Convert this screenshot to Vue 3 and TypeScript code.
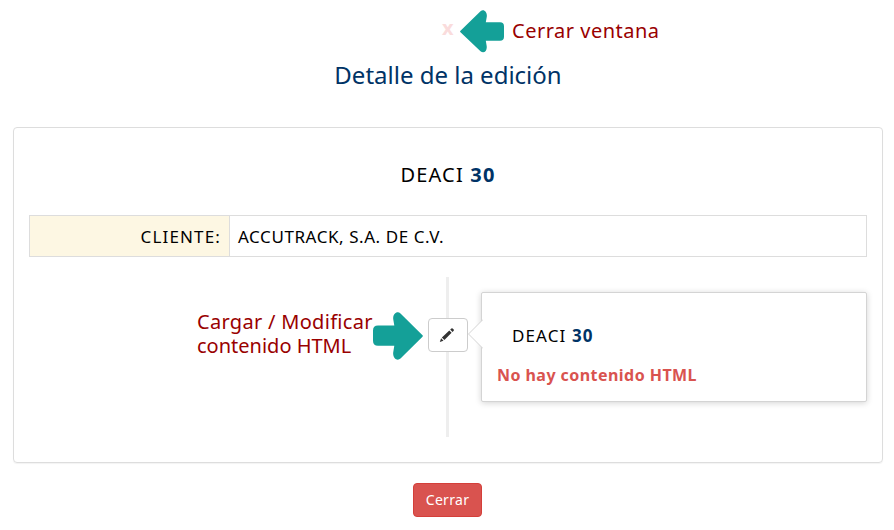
<script setup lang="ts">
interface Edition {
  code: string
  number: number
  client: string
}

const edition: Edition = { code: 'DEACI', number: 30, client: 'ACCUTRACK, S.A. DE C.V.' }
</script>

<template>
  <main class="page">
    <header class="top">
      <span class="close">x</span>
      <svg class="arrow-left" width="44" height="43" viewBox="0 0 44 43">
        <path d="M.5 20.8 20.5 1.2C24-1.8 27.7 2.5 26.7 7.2L25.8 12.3H40Q44 12.3 44 16.3V26.8Q44 30.8 40 30.8H25.8L26.6 35.5C27.6 40.7 24 44.2 20.5 41.3L.5 22.3Q-.3 21.5 .5 20.8Z" />
      </svg>
      <span class="note note-close">Cerrar ventana</span>
    </header>

    <h1 class="title">Detalle de la edición</h1>

    <section class="card">
      <h2 class="edition">{{ edition.code }} <b>{{ edition.number }}</b></h2>

      <div class="client">
        <div class="client-label">CLIENTE:</div>
        <div class="client-name">{{ edition.client }}</div>
      </div>

      <div class="timeline">
        <div class="hint">
          <div class="note note-edit">
            <p>Cargar / Modificar</p>
            <p class="second">contenido HTML</p>
          </div>
          <svg class="arrow-right" width="50" height="48" viewBox="0 0 50 48">
            <path d="M49.5 23.3 27.5 1.4C24-1.5 19.8 2 20.2 7L21.3 13.6H5Q0 13.6 0 18.6V28.8Q0 33.8 5 33.8H21.3L20.2 40.5C19.6 46 24 49.5 27.5 46.6L49.5 24.7Q50.2 24 49.5 23.3Z" />
          </svg>
        </div>

        <div class="rail">
          <button class="edit" aria-label="Modificar">
            <svg width="16" height="16" viewBox="0 0 16 16">
              <path d="M.8 15 2.1 11.3 4.5 13.7ZM2.9 10.4 10.3 3.5 12.6 5.8 5.4 12.9ZM11.2 2.6 12.4 1.5Q13 1 13.6 1.5L14.7 2.6Q15.2 3.2 14.7 3.8L13.5 4.9Z" />
            </svg>
          </button>
        </div>

        <article class="panel">
          <svg class="pointer" width="15" height="30" viewBox="0 0 15 30">
            <path d="M15 .5.5 15 15 29.5" />
          </svg>
          <p class="panel-title">{{ edition.code }} <b>{{ edition.number }}</b></p>
          <p class="empty">No hay contenido HTML</p>
        </article>
      </div>
    </section>

    <footer class="footer">
      <button class="dismiss">Cerrar</button>
    </footer>
  </main>
</template>

<style>
body {
  margin: 0;
  background: #fff;
}
</style>

<style scoped>
.page {
  box-sizing: border-box;
  height: 530px;
  padding: 0 11px 0 13px;
  overflow: hidden;
  font-family: "Comic Sans MS", "Noto Sans", sans-serif;
  color: #000;
}

p,
h1,
h2 {
  margin: 0;
  font-weight: 400;
}

svg {
  display: block;
  flex: none;
}

.top {
  display: flex;
  align-items: flex-start;
  height: 60px;
  padding-left: 429px;
}

.close {
  width: 18px;
  padding-top: 14px;
  font-size: 20px;
  line-height: 27px;
  font-weight: 700;
  color: #fadcdc;
}

.arrow-left {
  margin-top: 10px;
  fill: #14a098;
}

.note {
  font-size: 20px;
  line-height: 24px;
  color: #900;
  white-space: nowrap;
}

.note-close {
  margin: 19px 0 0 8px;
  letter-spacing: 0.5px;
}

.title {
  font-size: 24px;
  line-height: 29px;
  text-align: center;
  color: #036;
}

.card {
  box-sizing: border-box;
  width: 870px;
  height: 336px;
  margin-top: 38px;
  padding: 32px 15px 0;
  border: 1px solid #ddd;
  border-radius: 4px;
  box-shadow: 0 1px 1px rgba(0, 0, 0, 0.05);
}

b {
  color: #036;
}

.edition {
  font-size: 20px;
  line-height: 30px;
  letter-spacing: 1.2px;
  text-align: center;
}

.client {
  box-sizing: border-box;
  display: flex;
  height: 42px;
  margin-top: 25px;
  border: 1px solid #ddd;
  font-size: 17px;
  line-height: 41px;
}

.client-label {
  box-sizing: border-box;
  width: 200px;
  padding-right: 8px;
  border-right: 1px solid #ddd;
  background: #fdf7e3;
  letter-spacing: 1.15px;
  text-align: right;
}

.client-name {
  padding-left: 8px;
  letter-spacing: 0.57px;
}

.timeline {
  display: flex;
  height: 160px;
  margin-top: 20px;
}

.hint {
  display: flex;
  width: 231px;
  padding: 33px 0 0 168px;
}

.note-edit {
  width: 176px;
  letter-spacing: 0.3px;
}

.second {
  letter-spacing: 0;
}

.arrow-right {
  margin-top: 2px;
  fill: #14a098;
}

.rail {
  display: flex;
  flex: none;
  align-items: flex-start;
  width: 40px;
  padding-top: 41px;
  box-sizing: border-box;
  background: linear-gradient(#eee, #eee) 18px 0 / 3px 100% no-repeat;
}

.edit {
  display: flex;
  align-items: center;
  justify-content: center;
  width: 40px;
  height: 34px;
  padding: 0 2px 1px 0;
  border: 1px solid #ccc;
  border-radius: 4px;
  background: #fff;
  fill: #333;
}

.panel {
  position: relative;
  box-sizing: border-box;
  width: 386px;
  height: 110px;
  margin: 15px 0 0 13px;
  padding: 30px 15px 0;
  border: 1px solid #d4d4d4;
  border-radius: 2px;
  background: #fff;
  box-shadow: 0 1px 6px rgba(0, 0, 0, 0.175);
}

.pointer {
  position: absolute;
  top: 26px;
  left: -14px;
  fill: #fff;
  stroke: #d4d4d4;
}

.panel-title {
  padding-left: 15px;
  font-size: 17px;
  line-height: 26px;
  letter-spacing: 1.1px;
}

.empty {
  margin-top: 13px;
  font-size: 16px;
  line-height: 26px;
  font-weight: 700;
  letter-spacing: 0.45px;
  color: #d9534f;
}

.footer {
  display: flex;
  padding: 20px 0 0 400px;
}

.dismiss {
  width: 69px;
  height: 34px;
  padding: 0;
  border: 1px solid #d43f3a;
  border-radius: 4px;
  background: #d9534f;
  color: #fff;
  font: 14px/30px "Comic Sans MS", "Noto Sans", sans-serif;
  letter-spacing: 0.3px;
}
</style>
